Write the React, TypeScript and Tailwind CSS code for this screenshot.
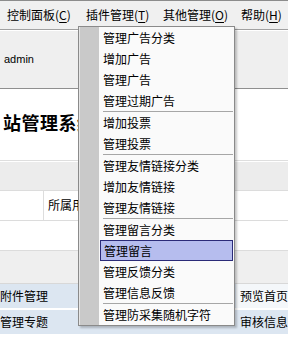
import React from 'react';

const cjk = { fontFamily: '"Noto Sans CJK SC", "Liberation Sans", sans-serif' };

type Entry = { label: string; sep?: boolean; active?: boolean };

// dropdown of the 插件管理 menu
const pluginMenu: Entry[] = [
  { label: '管理广告分类' },
  { label: '增加广告' },
  { label: '管理广告' },
  { label: '管理过期广告', sep: true },
  { label: '增加投票' },
  { label: '管理投票', sep: true },
  { label: '管理友情链接分类' },
  { label: '增加友情链接' },
  { label: '管理友情链接', sep: true },
  { label: '管理留言分类' },
  { label: '管理留言', active: true },
  { label: '管理反馈分类' },
  { label: '管理信息反馈', sep: true },
  { label: '管理防采集随机字符' },
];

function MenuTitle({ text, hot, width }: { text: string; hot: string; width: string }) {
  return (
    <div className={`${width} h-full flex items-center pl-[7px] whitespace-nowrap`}>
      {text}(<span className="underline underline-offset-2">{hot}</span>)
    </div>
  );
}

export default function App() {
  return (
    <div
      className="relative w-[288px] h-[344px] overflow-hidden bg-white text-[12px] text-black leading-none"
      style={cjk}
    >
      {/* window top edge + menu bar */}
      <div className="h-px bg-[#8c8c8c]" />
      <div className="h-[28px] bg-[#f0f0f0] flex items-center">
        <MenuTitle text="控制面板" hot="C" width="w-[79px]" />
        <MenuTitle text="插件管理" hot="T" width="w-[77px]" />
        <MenuTitle text="其他管理" hot="O" width="w-[78px]" />
        <MenuTitle text="帮助" hot="H" width="w-auto" />
      </div>
      <div className="h-px bg-[#a0a0a0]" />

      {/* user panel */}
      <div className="h-[58px] bg-[#efefef] border-t border-white flex items-center pl-[4px]">
        <span className="text-[11px]" style={{ fontFamily: '"Liberation Sans", sans-serif' }}>
          admin
        </span>
      </div>
      <div className="h-px bg-[#8f8f8f]" />

      {/* title */}
      <div className="h-[71px] flex items-center pl-[3px] pb-[6px]">
        <span className="text-[18px] font-bold tracking-[0.5px] whitespace-nowrap">站管理系统</span>
      </div>
      <div className="h-px bg-[#dedede]" />
      <div className="h-px bg-white" />
      <div className="h-[28px] bg-[#ececec]" />
      <div className="h-px bg-[#dcdcdc]" />

      {/* form row */}
      <div className="h-[29px] flex">
        <div className="w-[44px] border-r border-[#dddddd]" />
        <div className="flex items-center pl-[4px] pb-[2px] whitespace-nowrap">所属用户</div>
      </div>
      <div className="h-px bg-[#dcdcdc]" />
      <div className="h-[29px]" />
      <div className="h-px bg-[#dcdcdc]" />
      <div className="h-[32px] bg-[#efefef]" />
      <div className="h-px bg-[#d8d8d8]" />

      {/* link rows */}
      <div className="h-[24px] flex">
        <div className="w-[236px] bg-[#dce6f1] flex items-center whitespace-nowrap">附件管理</div>
        <div className="flex-1 bg-[#f4f7fa] flex items-center pl-[4px] whitespace-nowrap">预览首页</div>
      </div>
      <div className="h-[2px]" />
      <div className="h-[24px] flex">
        <div className="w-[236px] bg-[#dce6f1] flex items-center whitespace-nowrap">管理专题</div>
        <div className="flex-1 bg-[#dce6f1] flex items-center pl-[4px] whitespace-nowrap">审核信息</div>
      </div>
      <div className="h-[2px]" />
      <div className="h-[24px] flex">
        <div className="w-[236px] flex items-center pt-[14px] whitespace-nowrap">系统公告</div>
        <div className="flex-1 flex items-center pl-[4px] pt-[14px] whitespace-nowrap">数据备份</div>
      </div>

      {/* open dropdown */}
      <div className="absolute left-[78px] top-[26px] w-[157px] flex border border-[#8a8a8a] bg-[#fafafa] shadow-[2px_2px_2px_rgba(0,0,0,0.22)]">
        <div className="w-[20px] bg-[#c9c9c9] border-l border-[#e6e6e6]" />
        <div className="flex-1 flex flex-col">
          {pluginMenu.map((m) => (
            <React.Fragment key={m.label}>
              <div
                className={`h-[21px] mx-[1px] flex items-center pl-[3px] whitespace-nowrap ${
                  m.active ? 'bg-[#b6bdee] border border-[#2b2b78] pl-[2px]' : ''
                }`}
              >
                {m.label}
              </div>
              {m.sep && <div className="h-px ml-[4px] mr-[1px] bg-[#a6a6a6]" />}
            </React.Fragment>
          ))}
        </div>
      </div>
    </div>
  );
}
